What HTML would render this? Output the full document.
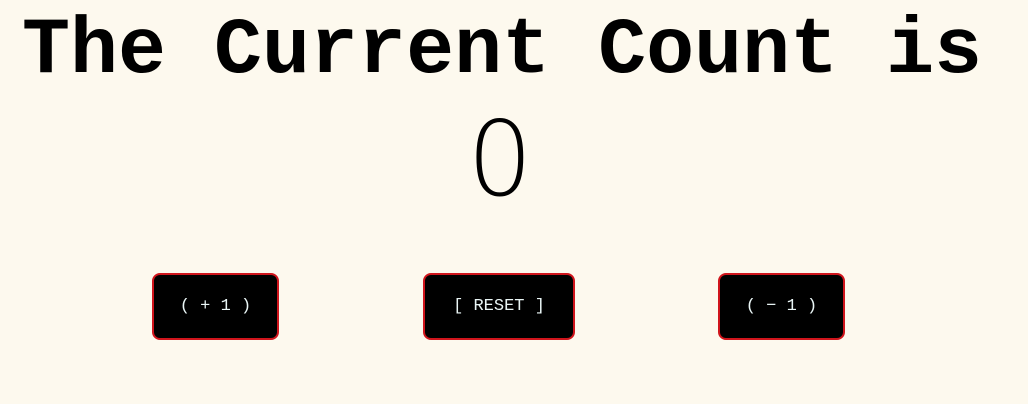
<!DOCTYPE html>
<html><head><meta charset="utf-8"><style>
html,body{margin:0;padding:0;background:#fdf9ee;width:1028px;height:404px;overflow:hidden;position:relative}
h1{position:absolute;left:22px;top:2px;margin:0;font:bold 80px/100px "Liberation Mono",monospace;color:#000;white-space:pre}
.n{position:absolute;left:0;width:1000px;text-align:center;top:100px;font:200 103px/120px "DejaVu Sans",sans-serif;color:#000}
.b{position:absolute;top:273px;height:63px;background:#000;border:2px solid #d0151c;border-radius:8px;color:#eaf6f6;font:17px/63px "Liberation Mono",monospace;text-align:center;white-space:pre}
</style></head><body>
<h1>The Current Count is</h1>
<div class="n">0</div>
<div class="b" style="left:152px;width:123px">( + 1 )</div>
<div class="b" style="left:423px;width:148px">[ RESET ]</div>
<div class="b" style="left:718px;width:123px">( − 1 )</div>
</body></html>
